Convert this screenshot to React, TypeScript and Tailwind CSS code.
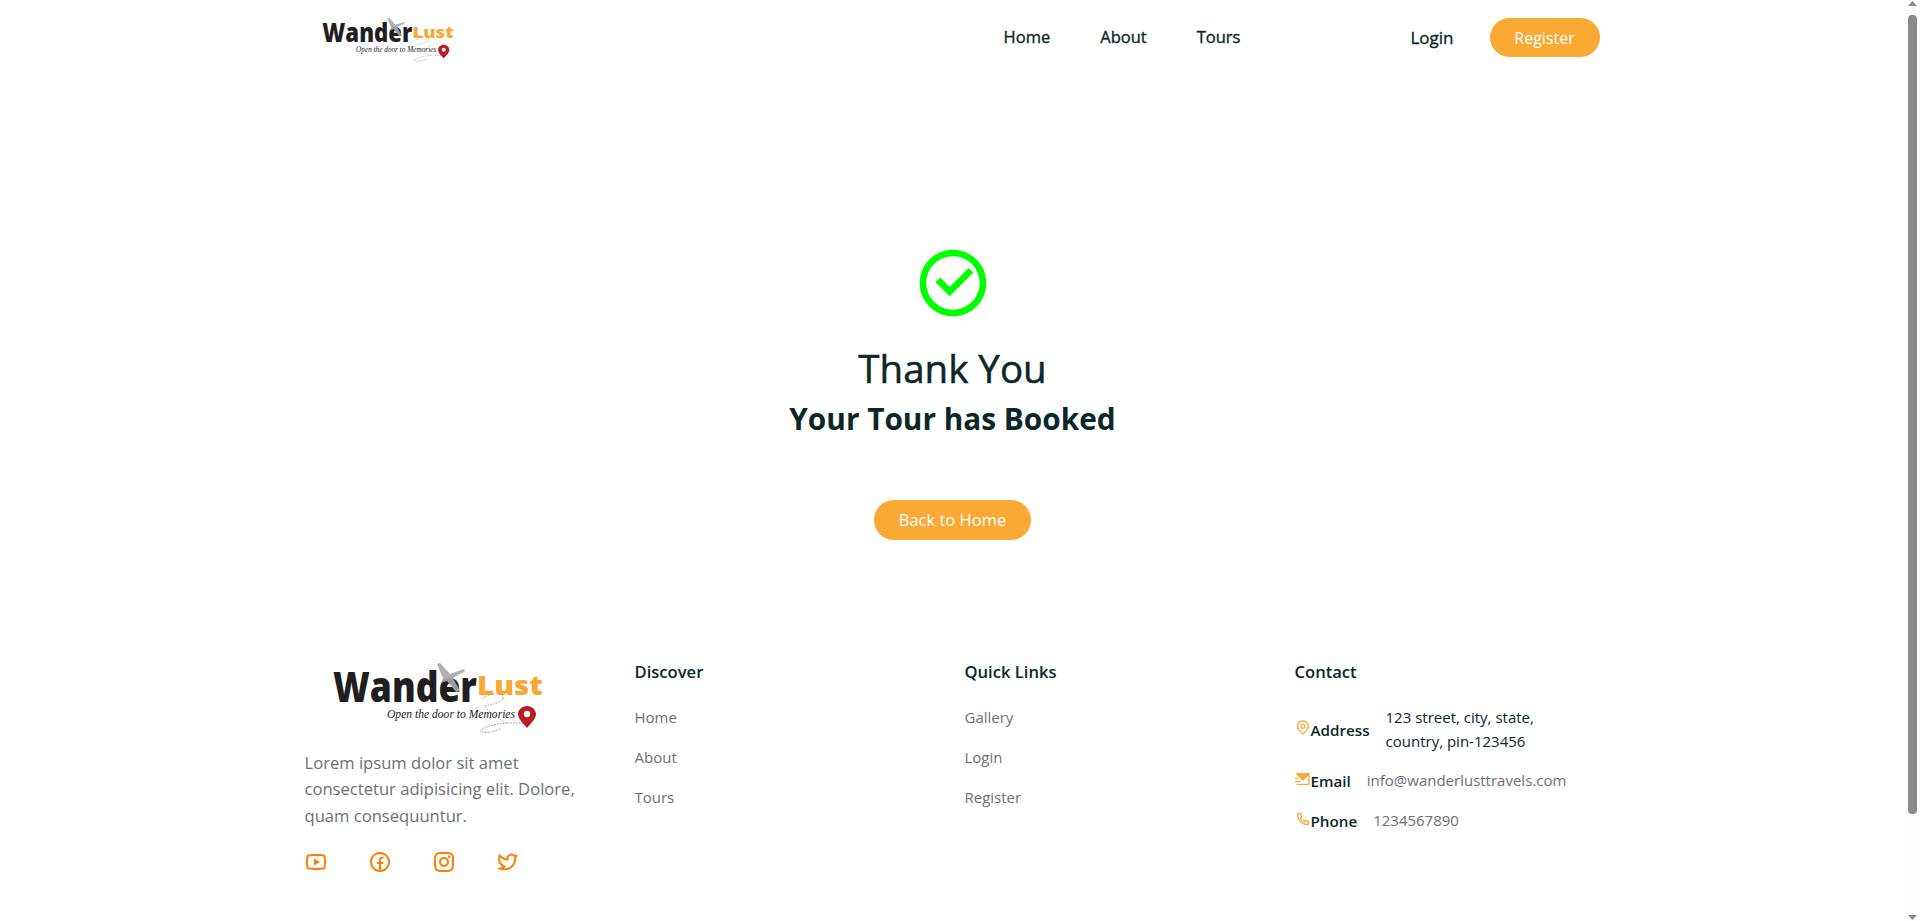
import { RiCheckboxCircleLine, RiYoutubeLine, RiFacebookCircleLine, RiInstagramLine, RiTwitterLine, RiMapPinLine, RiMailSendFill, RiPhoneLine } from 'react-icons/ri'

const font = { fontFamily: '"Open Sans", sans-serif' }

function Logo({ className }: { className: string }) {
  return (
    <svg viewBox="0 0 230 90" className={className} aria-label="WanderLust logo">
      <text x="10" y="42" fontFamily="'Open Sans', sans-serif" fontWeight="800" fontSize="42" fill="#1f1f1f" textLength="144" lengthAdjust="spacingAndGlyphs">
        Wander
      </text>
      <text x="154" y="35" fontFamily="'Open Sans', sans-serif" fontWeight="800" fontSize="26" fill="#fba733" textLength="66" lengthAdjust="spacingAndGlyphs">
        Lust
      </text>
      <text x="64" y="58" fontFamily="'Liberation Serif', serif" fontStyle="italic" fontSize="12.5" fill="#222" textLength="128" lengthAdjust="spacingAndGlyphs">
        Open the door to Memories
      </text>
      <path d="M114 4 L117 3 L127 14 L141 9 L142 11 L130 18 L137 31 L133 32 L124 21 L118 23 L120 18 Z" fill="#a8a8a8" fillOpacity="0.9" />
      <path d="M204 46 c-5 0 -9 4 -9 8 c0 5 5 9 9 14 c4 -5 9 -9 9 -14 c0 -4 -4 -8 -9 -8 Z" fill="#b81c24" />
      <circle cx="204" cy="54" r="3.2" fill="#fff" />
      <path d="M160 38 C172 30 186 35 178 41 C168 47 158 44 163 48 C170 54 176 60 184 63 L200 63 M184 63 C170 64 158 68 157 71 C160 74 172 72 178 68" fill="none" stroke="#999" strokeWidth="0.9" strokeDasharray="1.6 1.2" />
    </svg>
  )
}

const discover = ['Home', 'About', 'Tours']
const quick = ['Gallery', 'Login', 'Register']

function LinkColumn({ title, links }: { title: string; links: string[] }) {
  return (
    <div className="w-[330px] px-3">
      <h5 className="text-[16.6px] font-semibold leading-[24px] text-[#0b2727]">{title}</h5>
      <ul className="mt-[21px] flex flex-col gap-[16px]">
        {links.map((l) => (
          <li key={l} className="text-[15px] leading-[24px] text-[#6e7074]">
            {l}
          </li>
        ))}
      </ul>
    </div>
  )
}

export default function App() {
  return (
    <div className="flex h-[921px] w-full overflow-hidden bg-white" style={font}>
      <div className="min-w-0 flex-1">
        <header className="mx-auto flex h-[75px] w-[1320px] items-center pl-3 pr-[13px]">
          <Logo className="ml-[11px] mt-[13px] w-[144px]" />
          <nav className="ml-auto mr-[170px] flex gap-[50px] text-[16.5px] text-[#0b2727] [-webkit-text-stroke:0.35px_#0b2727]">
            <a>Home</a>
            <a>About</a>
            <a>Tours</a>
          </nav>
          <div className="flex items-center gap-9">
            <a className="text-[17px] text-[#0b2727] [-webkit-text-stroke:0.35px_#0b2727]">Login</a>
            <button className="h-[39px] w-[110px] rounded-full bg-[#faa935] text-[16px] text-white">Register</button>
          </div>
        </header>

        <main className="mx-auto flex w-[1320px] flex-col items-center pt-[168px] text-[#0b2727]">
          <RiCheckboxCircleLine className="text-[80px] text-[#00ff00]" />
          <h1 className="mt-[21px] text-[38.5px] leading-[48px] [-webkit-text-stroke:0.5px_#0b2727]">Thank You</h1>
          <h3 className="mt-[8px] text-[29.8px] font-bold leading-[38px]">Your Tour has Booked</h3>
          <button className="mt-[62px] h-[40px] w-[157px] rounded-full bg-[#faa935] text-[16.5px] text-white">Back to Home</button>
        </main>

        <footer className="mx-auto mt-[120px] flex w-[1320px]">
          <div className="w-[330px] px-3">
            <Logo className="ml-[18px] w-[230px]" />
            <p className="w-[285px] text-[16.6px] leading-[26.4px] text-[#6e7074]">
              Lorem ipsum dolor sit amet consectetur adipisicing elit. Dolore, quam consequuntur.
            </p>
            <div className="-ml-[1px] mt-[21px] flex gap-[40px] text-[24px] text-[#ff7e01]">
              <RiYoutubeLine />
              <RiFacebookCircleLine />
              <RiInstagramLine />
              <RiTwitterLine />
            </div>
          </div>
          <LinkColumn title="Discover" links={discover} />
          <LinkColumn title="Quick Links" links={quick} />
          <div className="w-[330px] px-3">
            <h5 className="text-[16.6px] font-semibold leading-[24px] text-[#0b2727]">Contact</h5>
            <ul className="mt-[21px] flex flex-col gap-[15px] text-[15px]">
              <li className="flex items-center gap-4">
                <span className="mt-[2px] flex items-center text-[15.2px] font-semibold text-[#0b2727]">
                  <RiMapPinLine className="-mt-[5px] text-[16px] text-[#faa935]" />
                  Address
                </span>
                <span className="w-[170px] leading-[24px] text-[#0b2727]">123 street, city, state, country, pin-123456</span>
              </li>
              <li className="flex items-center gap-4">
                <span className="mt-[2px] flex items-center text-[15.2px] font-semibold text-[#0b2727]">
                  <RiMailSendFill className="-mt-[5px] text-[16px] text-[#faa935]" />
                  Email
                </span>
                <span className="leading-[24px] text-[#6e7074]">info@wanderlusttravels.com</span>
              </li>
              <li className="flex items-center gap-4">
                <span className="mt-[2px] flex items-center text-[15.2px] font-semibold text-[#0b2727]">
                  <RiPhoneLine className="-mt-[5px] text-[16px] text-[#faa935]" />
                  Phone
                </span>
                <span className="leading-[24px] text-[#6e7074]">1234567890</span>
              </li>
            </ul>
          </div>
        </footer>
      </div>

      {/* window scrollbar */}
      <aside className="flex w-[15px] shrink-0 flex-col items-center bg-[#fdfdfd]">
        <svg viewBox="0 0 9 5" className="mt-[1px] h-[5px] w-[9px] fill-[#8a8a8a]"><path d="M4.5 0 9 5H0z" /></svg>
        <div className="mt-[9px] h-[799px] w-[9px] rounded-[4px] bg-[#8a8a8a]" />
        <svg viewBox="0 0 9 5" className="mt-auto mb-[1px] h-[5px] w-[9px] fill-[#8a8a8a]"><path d="M0 0h9L4.5 5z" /></svg>
      </aside>
    </div>
  )
}
